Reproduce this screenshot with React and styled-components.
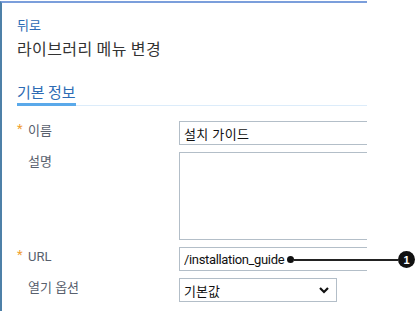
import React from "react";
import styled, { createGlobalStyle } from "styled-components";

const GlobalStyle = createGlobalStyle`
    html, body {
        margin: 0;
        padding: 0;
        background: #fff;
    }
    body {
        font-family: Roboto, "Noto Sans CJK KR", sans-serif;
    }
`;

export default function App() {
    return (
        <Wrapper>
            <GlobalStyle />
            <Panel>
                <BackLink>뒤로</BackLink>
                <Title>라이브러리 메뉴 변경</Title>
                <TabBar>
                    <Tab>기본 정보</Tab>
                </TabBar>
                <Form>
                    <Label required>이름</Label>
                    <TextInput $spacing="0.4px" defaultValue="설치 가이드" />

                    <Label>설명</Label>
                    <TextArea />

                    <Label required>URL</Label>
                    <TextInput $spacing="-0.35px" defaultValue="/installation_guide" />

                    <Label>열기 옵션</Label>
                    <Select>
                        <span>기본값</span>
                        <svg width="12" height="12" viewBox="0 0 12 12">
                            <path d="M2 4 L6 8 L10 4" fill="none" stroke="#111" strokeWidth="2.2" />
                        </svg>
                    </Select>
                </Form>
            </Panel>
            <Callout>
                <Dot />
                <Line />
                <Badge>1</Badge>
            </Callout>
        </Wrapper>
    );
}

const Wrapper = styled.div`
    position: relative;
    width: 416px;
    height: 311px;
    overflow: hidden;
`;
const Panel = styled.div`
    width: 367px;
    height: 311px;
    margin-top: 1px;
    border-left: 2px solid #4d80a8;
    border-top: 2px solid #7b9edb;
    padding: 13px 0 0 15px;
    box-sizing: border-box;
    overflow: hidden;
`;
const BackLink = styled.div`
    color: #2d6bb4;
    font-size: 13px;
    line-height: 18px;
    font-family: "Noto Sans CJK KR", sans-serif;
`;
const Title = styled.h1`
    margin: 3px 0 0;
    color: #333;
    font-size: 16px;
    font-weight: 400;
    line-height: 22px;
    letter-spacing: 0.4px;
    font-family: "Noto Sans CJK KR", sans-serif;
`;
const TabBar = styled.div`
    margin-top: 23px;
    border-bottom: 1px solid #dcecfa;
`;
const Tab = styled.div`
    display: inline-block;
    color: #2d6bb4;
    font-size: 15px;
    line-height: 20px;
    padding-bottom: 1px;
    border-bottom: 3px solid #5aa9ea;
    margin-bottom: -1px;
    font-family: "Noto Sans CJK KR", sans-serif;
`;
const Form = styled.div`
    display: grid;
    grid-template-columns: 162px 200px;
    row-gap: 7px;
    margin-top: 15px;
`;
const Label = styled.div`
    position: relative;
    padding-left: 11px;
    color: #58606d;
    font-size: 13px;
    line-height: 18px;
    padding-top: 1px;
    font-family: Roboto, "Noto Sans CJK KR", sans-serif;
    &::before {
        content: ${(p) => (p.required ? '"*"' : '""')};
        position: absolute;
        left: 0;
        top: -1px;
        color: #f0a030;
        font-size: 13px;
    }
`;
const fieldBase = `
    box-sizing: border-box;
    border: 1px solid #b3bec8;
    background: #fff;
    font-family: Roboto, "Noto Sans CJK KR", sans-serif;
    font-size: 13px;
    color: #111;
    outline: none;
    margin: 0;
`;
const TextInput = styled.input`
    ${fieldBase}
    width: 200px;
    height: 24px;
    padding: 0 4px;
    letter-spacing: ${(p) => p.$spacing || "0"};
`;
const TextArea = styled.textarea`
    ${fieldBase}
    width: 200px;
    height: 88px;
    resize: none;
`;
const Select = styled.div`
    ${fieldBase}
    width: 158px;
    height: 24px;
    padding: 0 6px 0 4px;
    display: flex;
    align-items: center;
    justify-content: space-between;
`;
const Callout = styled.div`
    position: absolute;
    left: 287px;
    top: 251px;
    display: flex;
    align-items: center;
`;
const Dot = styled.span`
    width: 7px;
    height: 7px;
    border-radius: 50%;
    background: #111;
`;
const Line = styled.span`
    width: 104px;
    height: 2px;
    background: #222;
`;
const Badge = styled.span`
    width: 17px;
    height: 17px;
    border-radius: 50%;
    background: #111;
    color: #fff;
    font-size: 11px;
    font-weight: 700;
    display: flex;
    align-items: center;
    justify-content: center;
    font-family: "Liberation Sans", sans-serif;
`;
